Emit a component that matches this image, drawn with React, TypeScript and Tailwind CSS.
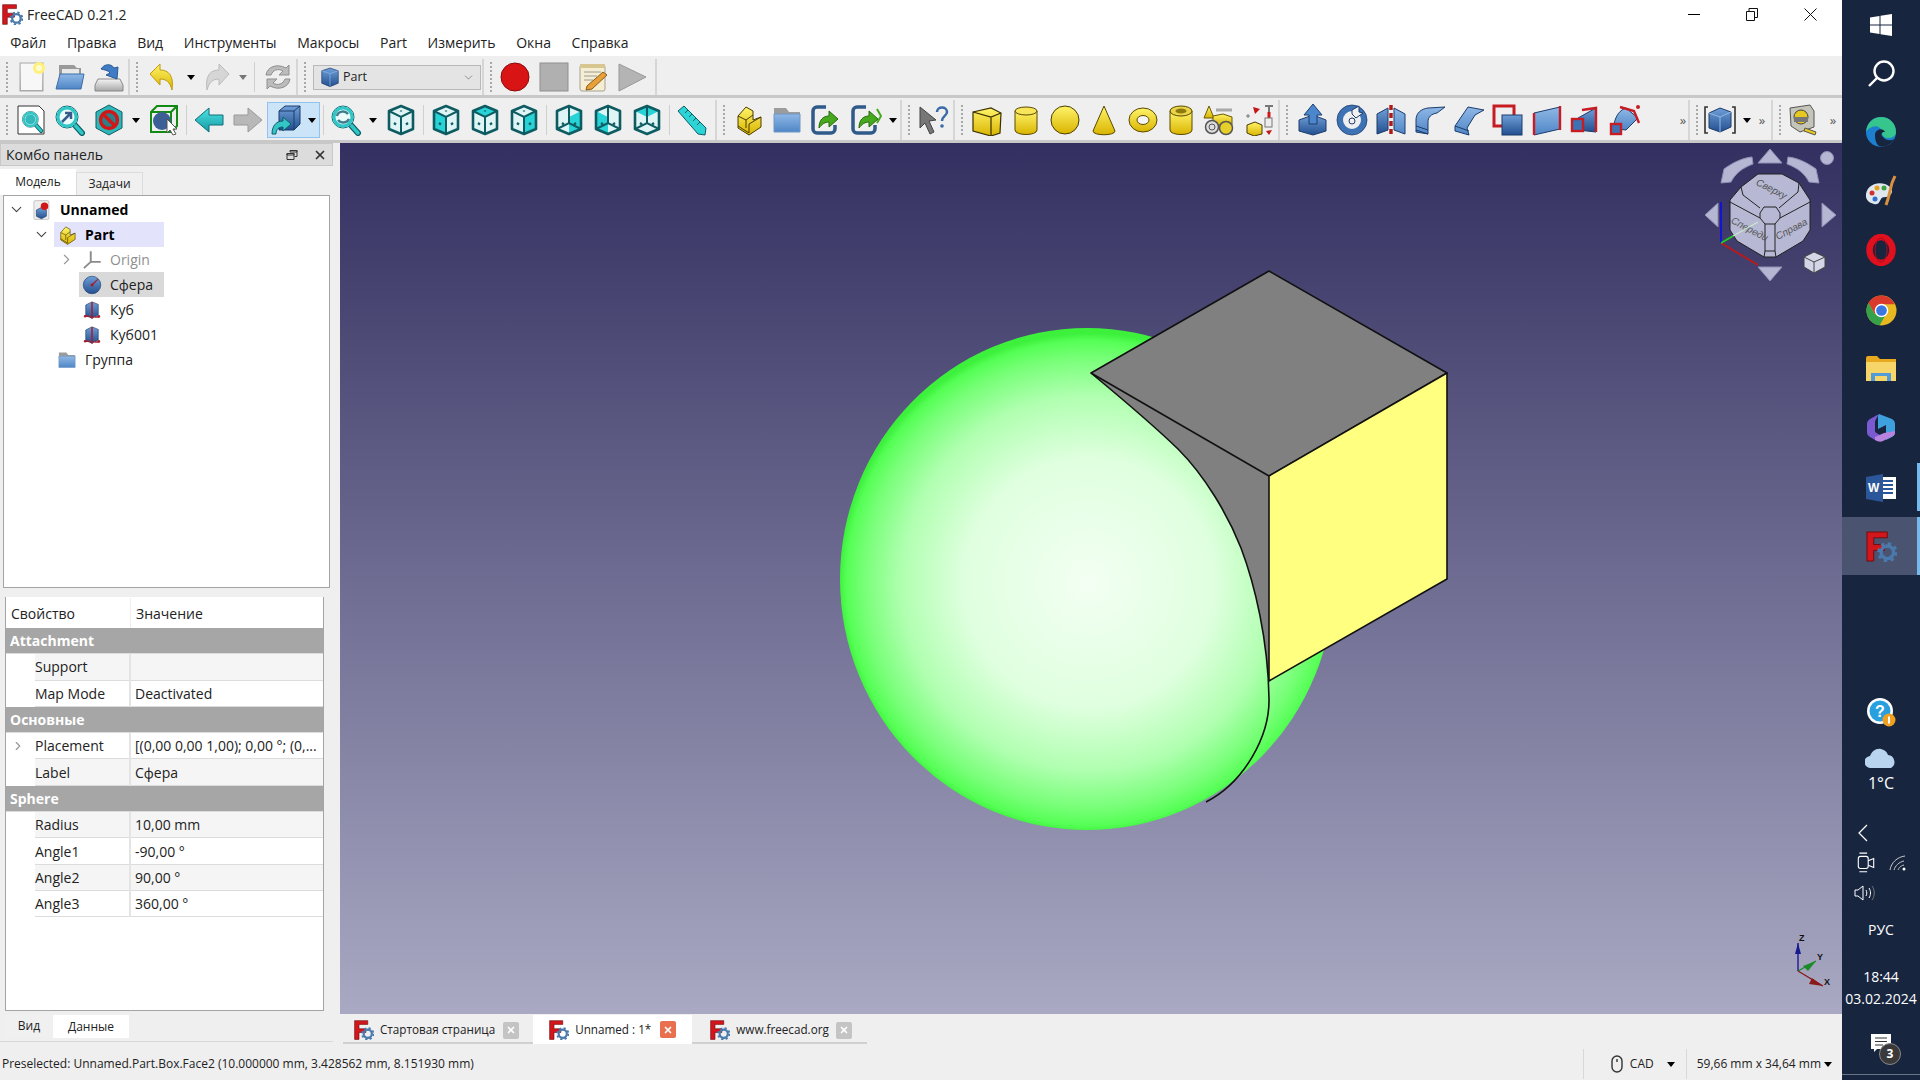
import type { ReactNode } from 'react';
import { ChevronDown, ChevronRight, X } from 'lucide-react';

function Ic({ children, size = 32 }: { children: ReactNode; size?: number }) {
  return (
    <svg width={size} height={size} viewBox="0 0 32 32" className="shrink-0">
      {children}
    </svg>
  );
}

function Defs() {
  const grads: [string, string, string][] = [
    ['gy', '#fff46a', '#d9b400'],
    ['gb', '#6f9fd8', '#234f8f'],
    ['gt', '#4fe3e3', '#149aa4'],
    ['gg', '#f4f4f4', '#a8a8a8'],
    ['gf', '#8fb8e6', '#4f86c6'],
  ];
  return (
    <svg width="0" height="0" className="absolute">
      <defs>
        {grads.map(([id, a, b]) => (
          <linearGradient key={id} id={id} x1="0" y1="0" x2="0" y2="1">
            <stop offset="0" stopColor={a} />
            <stop offset="1" stopColor={b} />
          </linearGradient>
        ))}
        <radialGradient id="sphereShade" gradientUnits="userSpaceOnUse" cx="1089" cy="583" r="250">
          <stop offset="0" stopColor="#f3fff3" />
          <stop offset="0.5" stopColor="#dfffdf" />
          <stop offset="0.75" stopColor="#b0ffb0" />
          <stop offset="0.9" stopColor="#78ff78" />
          <stop offset="0.97" stopColor="#55ff55" />
          <stop offset="1" stopColor="#3cf03c" />
        </radialGradient>
        <linearGradient id="viewBg" x1="0" y1="0" x2="0" y2="1">
          <stop offset="0" stopColor="#332f60" />
          <stop offset="1" stopColor="#a9a9c3" />
        </linearGradient>
      </defs>
    </svg>
  );
}

function Logo({ size = 20 }: { size?: number }) {
  return (
    <svg width={size} height={size} viewBox="0 0 32 32" className="shrink-0">
      <path d="M1 1h21v6H8v7h11v6H8v11H1z" fill="#d3161c" stroke="#6d0d10" strokeWidth="1" />
      <circle cx="22" cy="22" r="6.5" fill="none" stroke="#4a79ad" strokeWidth="3.5" />
      <circle cx="22" cy="22" r="9" fill="none" stroke="#4a79ad" strokeWidth="3" strokeDasharray="3.5 3.6" />
    </svg>
  );
}

/* ---------- file / edit icons ---------- */
const NewDoc = () => (
  <Ic>
    <rect x="5" y="2" width="23" height="28" fill="url(#gg)" stroke="#aaa" />
    <rect x="6" y="3" width="21" height="26" fill="#f7f7f7" />
    <circle cx="24" cy="7" r="6" fill="#fff07a" />
    <circle cx="24" cy="7" r="3" fill="#fffbd0" />
  </Ic>
);
const OpenDoc = () => (
  <Ic>
    <path d="M5 4h15l3 3h4v8H5z" fill="#9a9a9a" />
    <path d="M8 8h17v6H8z" fill="#e8e8e8" />
    <path d="M6 13h24l-3 15H2z" fill="url(#gf)" stroke="#3d6ea8" />
  </Ic>
);
const SaveDoc = () => (
  <Ic>
    <path d="M5 18h22l3 6v6H2v-6z" fill="url(#gg)" stroke="#888" />
    <path d="M8 8c3-5 10-6 13-1l4-1-1 12-11-4 4-2c-2-3-6-3-9-4z" fill="#3f7cc4" stroke="#2a5a95" />
  </Ic>
);
const UndoIcon = ({ gray }: { gray?: boolean }) => (
  <Ic>
    <path
      d="M4 13 14 3v6c9 0 14 6 12 20-2-8-6-11-12-11v6z"
      fill={gray ? '#d6d6d6' : 'url(#gy)'}
      stroke={gray ? '#bbb' : '#c09a10'}
      transform={gray ? 'translate(32 0) scale(-1 1)' : undefined}
    />
  </Ic>
);
const RefreshIcon = () => (
  <Ic>
    <path d="M4 14C5 6 15 2 24 7l3-3v10H17l4-4c-5-3-10-1-12 4z" fill="#bcbcbc" stroke="#8f8f8f" />
    <path d="M28 18c-1 8-11 12-20 7l-3 3V18h10l-4 4c5 3 10 1 12-4z" fill="#bcbcbc" stroke="#8f8f8f" />
  </Ic>
);
const RecordIcon = () => (
  <Ic>
    <circle cx="16" cy="16" r="14" fill="#d81414" stroke="#8a0c0c" />
  </Ic>
);
const StopIcon = () => (
  <Ic>
    <rect x="2" y="2" width="28" height="28" fill="#b0b0b0" stroke="#8f8f8f" />
  </Ic>
);
const MacroIcon = () => (
  <Ic>
    <rect x="3" y="4" width="25" height="26" rx="2" fill="#f5eed2" stroke="#a8a290" />
    <rect x="3" y="3" width="25" height="4" fill="#d8c690" />
    <path d="M7 11h17M7 15h13M7 19h9" stroke="#9a9a9a" />
    <path d="M10 25 26 11l4 3-15 14-6 1z" fill="#e8a13a" stroke="#8a5a18" />
  </Ic>
);
const PlayIcon = () => (
  <Ic>
    <path d="M3 3 30 16 3 30z" fill="#b4b4b4" stroke="#999" />
  </Ic>
);

/* ---------- view icons ---------- */
const Magnifier = ({ children }: { children?: ReactNode }) => (
  <>
    <path d="M19 19l9 10" stroke="#0f5f66" strokeWidth="6" strokeLinecap="round" />
    <path d="M19 19l9 10" stroke="#2fc6c6" strokeWidth="3.5" strokeLinecap="round" />
    <circle cx="13" cy="13" r="11" fill="#e9fbfb" stroke="#0f6f78" strokeWidth="1" />
    <circle cx="13" cy="13" r="9" fill="none" stroke="#2fc6c6" strokeWidth="3" />
    {children}
  </>
);
const FitAll = () => (
  <Ic>
    <path d="M3 2h21l5 5v23H3z" fill="#fff" stroke="#333" />
    <g transform="translate(6 6) scale(.72)">
      <Magnifier />
      <circle cx="13" cy="13" r="7" fill="#33b8bc" />
    </g>
  </Ic>
);
const FitSel = () => (
  <Ic>
    <Magnifier>
      <path d="M8 18l9-9m-6 0h6v6" stroke="#3a5a8c" strokeWidth="2.5" fill="none" />
    </Magnifier>
  </Ic>
);
const DrawStyle = () => (
  <Ic>
    <path d="M16 1 29 8v16l-13 7-13-7V8z" fill="#2fb6b8" stroke="#0f5f66" />
    <circle cx="16" cy="16" r="8.5" fill="#2d7f88" stroke="#d01818" strokeWidth="3.4" />
    <path d="M10 10l12 12" stroke="#d01818" strokeWidth="3.4" />
  </Ic>
);
const BBoxIcon = () => (
  <Ic>
    <path d="M3 8 9 2h20v20l-6 6H3z" fill="none" stroke="#138a13" strokeWidth="2" />
    <path d="M3 8h20v20M23 8l6-6" fill="none" stroke="#138a13" strokeWidth="2" />
    <circle cx="14" cy="17" r="9" fill="#3c5f95" />
    <path d="M19 15v14l3-3 3 5 3-1-3-5h4z" fill="#fff" stroke="#555" />
  </Ic>
);
const NavArrow = ({ gray, flip }: { gray?: boolean; flip?: boolean }) => (
  <Ic>
    <path
      d="M2 16 16 4v7h14v10H16v7z"
      fill={gray ? '#b8b8b8' : 'url(#gt)'}
      stroke={gray ? '#999' : '#0f6f78'}
      transform={flip ? 'translate(32 0) scale(-1 1)' : undefined}
    />
  </Ic>
);
const SyncView = () => (
  <Ic>
    <path d="M9 7 15 2h15v18l-6 6H9z" fill="url(#gb)" stroke="#1c3c6c" />
    <path d="M9 7h15v19M24 7l6-5" fill="none" stroke="#1c3c6c" />
    <path d="M2 30c0-9 5-13 11-13v-4l8 7-8 7v-4c-4 0-7 2-7 7z" fill="#34c6c6" stroke="#0f5f66" />
  </Ic>
);
const ZoomSync = () => (
  <Ic>
    <Magnifier>
      <path d="M7 12c1-5 8-6 11-2m1 5c-2 4-8 5-11 1" fill="none" stroke="#3c7c8c" strokeWidth="2.5" />
    </Magnifier>
  </Ic>
);

function CubeView({ top, left, right, inner }: { top?: boolean; left?: boolean; right?: boolean; inner?: boolean }) {
  const on = '#27d3d6';
  return (
    <Ic>
      <path d="M16 2 28 7v18l-12 5-12-5V7z" fill="#dff5f5" />
      {top && <path d="M16 2 28 7 16 13 4 7z" fill={on} />}
      {left && <path d="M4 7l12 6v17L4 25z" fill={on} />}
      {right && <path d="M28 7 16 13v17l12-5z" fill={on} />}
      {inner ? (
        <path d="M4 25l12-6 12 6M16 19V2" fill="none" stroke="#0e5c62" strokeWidth="2" />
      ) : (
        <path d="M4 7l12 6 12-6M16 13v17" fill="none" stroke="#0e5c62" strokeWidth="2" />
      )}
      <path d="M16 2 28 7v18l-12 5-12-5V7z" fill="none" stroke="#0e5c62" strokeWidth="2.6" strokeLinejoin="round" />
      <path d="M9 19l2 1.5M23 19l-2 1.5M16 7.5v-1" stroke="#0e5c62" strokeWidth="2.2" />
    </Ic>
  );
}
const Ruler = () => (
  <Ic>
    <path d="M8 2 30 24l-1 7-7-1L2 7z" fill="#2dd4d6" stroke="#0f5f66" />
    <path d="M9 9l3-3M13 13l3-3M17 17l3-3M21 21l3-3" stroke="#0f5f66" />
  </Ic>
);

/* ---------- structure ---------- */
const PartIcon = () => (
  <>
    <path d="M6 12l8-9 7 4v9l8-3v10l-12 8L6 24z" fill="url(#gy)" stroke="#4a3c00" />
    <path d="M6 12l8 4v8M14 16l7-5M6 22l11 7M17 29v-9l12-7" fill="none" stroke="#4a3c00" />
  </>
);
const GroupIcon = () => (
  <>
    <path d="M3 4h12l3 4h11v5H3z" fill="#9c9c9c" />
    <path d="M3 10h26v18H3z" fill="url(#gf)" stroke="#6f96c4" />
  </>
);
const LinkIcon = ({ sub }: { sub?: boolean }) => (
  <Ic>
    <path d="M16 3H7a4 4 0 0 0-4 4v18a4 4 0 0 0 4 4h14a4 4 0 0 0 4-4v-4" fill="none" stroke="#2f5a8a" strokeWidth="3.5" />
    <path d="M9 24c0-8 4-12 10-12V7l9 8-9 8v-5c-4 0-7 2-10 6z" fill="#46a81c" stroke="#256b0c" />
    {sub && <path d="M27 5l4 7-4 7" fill="none" stroke="#46a81c" strokeWidth="2" />}
  </Ic>
);
const WhatsThis = () => (
  <Ic>
    <path d="M2 3l16 13-7 1 5 11-4 2-5-11-5 5z" fill="#777" stroke="#444" />
    <path d="M19 8c0-6 10-6 10 0 0 4-5 4-5 9" fill="none" stroke="#3a6aa8" strokeWidth="2.5" />
    <circle cx="24" cy="22" r="1.8" fill="#3a6aa8" />
  </Ic>
);

/* ---------- part primitives ---------- */
const BoxP = () => (
  <Ic>
    <path d="M2 8 20 4l10 5-1 20-9 3-18-5z" fill="url(#gy)" stroke="#3a3000" strokeWidth="1.2" />
    <path d="M2 8l18 5 10-4M20 13v19" fill="none" stroke="#3a3000" strokeWidth="1.2" />
  </Ic>
);
const CylP = () => (
  <Ic>
    <path d="M5 7v19c0 6 22 6 22 0V7z" fill="url(#gy)" stroke="#5a4800" />
    <ellipse cx="16" cy="7" rx="11" ry="4" fill="#f7e55a" stroke="#5a4800" />
  </Ic>
);
const SphereP = () => (
  <Ic>
    <circle cx="16" cy="16" r="14" fill="url(#gy)" stroke="#4a3c00" />
  </Ic>
);
const ConeP = () => (
  <Ic>
    <path d="M16 2 27 27c0 5-22 5-22 0z" fill="url(#gy)" stroke="#5a4800" />
  </Ic>
);
const TorusP = () => (
  <Ic>
    <ellipse cx="16" cy="16" rx="14" ry="12" fill="url(#gy)" stroke="#5a4800" />
    <ellipse cx="16" cy="16" rx="6" ry="4.5" fill="#f4f4f4" stroke="#5a4800" />
  </Ic>
);
const TubeP = () => (
  <Ic>
    <path d="M5 7v19c0 6 22 6 22 0V7z" fill="url(#gy)" stroke="#5a4800" />
    <ellipse cx="16" cy="7" rx="11" ry="5" fill="#e9d548" stroke="#5a4800" />
    <ellipse cx="16" cy="7" rx="5.5" ry="2.4" fill="#8f7a10" />
  </Ic>
);
const CreatePrim = () => (
  <Ic>
    <path d="M6 2 11 14H1z" fill="url(#gy)" stroke="#6a5800" />
    <path d="M13 6h16" stroke="#a8a8a8" strokeWidth="3" />
    <path d="M10 12l10-2 9 3v8H10z" fill="url(#gy)" stroke="#6a5800" />
    <circle cx="9" cy="23" r="6.5" fill="#ddd" stroke="#555" strokeWidth="1.5" />
    <circle cx="9" cy="23" r="3" fill="none" stroke="#555" />
    <circle cx="23" cy="24" r="6.5" fill="#e7cf2a" stroke="#555" strokeWidth="1.5" />
  </Ic>
);
const ShapeBuilder = () => (
  <Ic>
    <path d="M22 2h8M26 2v10" stroke="#777" strokeWidth="2" />
    <path d="M26 8v6" stroke="#d01818" strokeWidth="3" />
    <rect x="22" y="14" width="7" height="9" fill="#eee" stroke="#777" />
    <path d="M10 3l7 2-5 5z" fill="#c41616" />
    <path d="M23 27l6-1-3 5z" fill="#c41616" />
    <path d="M3 12h4M5 10v4" stroke="#777" />
    <path d="M4 21l8-3 7 3v9l-8 2-7-3z" fill="url(#gy)" stroke="#4a3c00" />
  </Ic>
);

/* ---------- part tools ---------- */
const Extrude = () => (
  <Ic>
    <path d="M2 16 16 11l13 5v11l-13 4L2 27z" fill="url(#gb)" stroke="#1c3c6c" />
    <path d="M16 0 25 11h-5v9h-8v-9H7z" fill="#4b87cc" stroke="#1c3c6c" />
  </Ic>
);
const Revolve = () => (
  <Ic>
    <circle cx="16" cy="16" r="12" fill="none" stroke="#3d73b5" strokeWidth="6" />
    <circle cx="16" cy="16" r="15" fill="none" stroke="#1c3c6c" strokeWidth=".8" />
    <circle cx="16" cy="17" r="3" fill="#f0f0f0" stroke="#1c3c6c" />
    <path d="M16 6l7-4v6l4 1-7 5-4-4z" fill="#f0f0f0" stroke="#1c3c6c" />
  </Ic>
);
const Mirror = () => (
  <Ic>
    <path d="M2 10 13 4v22L2 30z" fill="url(#gb)" stroke="#1c3c6c" />
    <path d="M30 10 19 4v22l11 4z" fill="url(#gf)" stroke="#1c3c6c" />
    <path d="M16 1v30" stroke="#b01818" strokeWidth="3.4" strokeDasharray="5 3" />
  </Ic>
);
const Fillet = () => (
  <Ic>
    <path d="M2 28V16C2 9 7 5 14 4l17-1-8 6c-6 1-9 4-9 9v12z" fill="url(#gf)" stroke="#1c3c6c" />
    <path d="M2 22l12 4M2 26l12 4" stroke="#1c3c6c" />
  </Ic>
);
const Chamfer = () => (
  <Ic>
    <path d="M2 22 15 3l16 3-9 5-8 13 2 7-14-4z" fill="url(#gf)" stroke="#1c3c6c" />
    <path d="M2 22l14 5" stroke="#1c3c6c" />
  </Ic>
);
const Direction = () => (
  <Ic>
    <path d="M2 2h20v20H2z" fill="none" stroke="#c81c24" strokeWidth="3" />
    <rect x="10" y="11" width="20" height="20" fill="url(#gb)" stroke="#1c3c6c" />
  </Ic>
);
const Ruled = () => (
  <Ic>
    <path d="M3 9 29 3v22L3 31z" fill="url(#gf)" stroke="#1c3c6c" />
    <path d="M3 9v22M29 2v24" stroke="#c81c24" strokeWidth="2.4" />
  </Ic>
);
const Loft = () => (
  <Ic>
    <path d="M8 14 26 4v24L8 26z" fill="url(#gb)" stroke="#1c3c6c" />
    <path d="M12 6l14-2v24" fill="none" stroke="#c81c24" strokeWidth="2.4" />
    <rect x="2" y="15" width="11" height="12" fill="#3d73b5" stroke="#c81c24" strokeWidth="2.4" />
  </Ic>
);
const Sweep = () => (
  <Ic>
    <path d="M5 20C7 11 11 6 17 4l12 10-12 12-9-1z" fill="url(#gf)" stroke="#1c3c6c" />
    <path d="M11 3l14 4 5 12" fill="none" stroke="#c81c24" strokeWidth="2.4" />
    <circle cx="29" cy="3" r="2" fill="#c81c24" />
    <rect x="2" y="20" width="10" height="10" fill="#3d73b5" stroke="#c81c24" strokeWidth="2.4" />
  </Ic>
);
const ViewBox = () => (
  <Ic>
    <path d="M4 3H1v26h3M28 3h3v26h-3" fill="none" stroke="#333" strokeWidth="1.6" />
    <path d="M5 9l11-5 11 4v15l-11 5-11-4z" fill="url(#gb)" stroke="#1c3c6c" />
    <path d="M5 9l11 4 11-5M16 13v15" fill="none" stroke="#8fb8e6" />
  </Ic>
);
const TapeIcon = () => (
  <Ic>
    <path d="M2 4 22 1l4 6v16L12 28 3 22z" fill="#c4c4b8" stroke="#555" />
    <circle cx="13" cy="13" r="7" fill="#e6c81e" stroke="#444" />
    <rect x="6" y="13" width="14" height="5" fill="#777" />
    <path d="M17 24l11 4-1 3-11-4z" fill="#e6c81e" stroke="#555" />
  </Ic>
);

/* ---------- toolbar bits ---------- */
function Btn({ children, w = 'w-[39px]' }: { children: ReactNode; w?: string }) {
  return <div className={`flex h-full shrink-0 items-center justify-center ${w}`}>{children}</div>;
}
const Grip = () => (
  <div className="ml-[3px] mr-[1px] h-[30px] w-[2px] shrink-0 self-center bg-[repeating-linear-gradient(to_bottom,#a8a8a8_0_2px,transparent_2px_4px)]" />
);
const Sep = () => <div className="mx-[2.5px] h-[30px] w-px shrink-0 self-center bg-[#d0d0d0]" />;
const Drop = ({ gray }: { gray?: boolean }) => (
  <div className="flex w-[16px] shrink-0 items-center justify-center">
    <div
      className={`h-0 w-0 border-x-[4.5px] border-t-[5px] border-x-transparent ${gray ? 'border-t-[#777]' : 'border-t-black'}`}
    />
  </div>
);
const More = () => <span className="w-[14px] shrink-0 text-center text-[13px] leading-none text-[#555]">»</span>;
function TB({ children, w, inner = 'ml-[2px]' }: { children: ReactNode; w: string; inner?: string }) {
  return (
    <div className={`flex h-full shrink-0 items-center border-r-2 border-[#d6d6d6] pl-[3px] ${w}`}>
      <Grip />
      <div className={`flex h-full items-center ${inner}`}>{children}</div>
    </div>
  );
}

function TopToolbar() {
  return (
    <div className="flex h-[42px] border-b-[3px] border-[#c8c8c8] bg-[#efefef] pt-[3px]">
      <TB w="w-[130px]">
        <Btn><NewDoc /></Btn>
        <Btn><OpenDoc /></Btn>
        <Btn><SaveDoc /></Btn>
      </TB>
      <TB w="w-[168px]">
        <Btn w="w-[42px]"><UndoIcon /></Btn>
        <Drop />
        <Btn w="w-[36px]"><UndoIcon gray /></Btn>
        <Drop gray />
        <Sep />
        <Btn w="w-[42px]"><RefreshIcon /></Btn>
      </TB>
      <TB w="w-[186px]">
        <div className="ml-[4px] flex h-[25px] w-[168px] items-center border border-[#b8b8b8] bg-[#e4e4e4] pl-[5px] pr-[5px] text-[12.5px]">
          <Ic size={22}>
            <path d="M4 7l12-4 12 4v18l-12 5-12-5z" fill="url(#gb)" stroke="#1c3c6c" />
            <path d="M4 7l12 4 12-4M16 11v19" fill="none" stroke="#8fb8e6" />
          </Ic>
          <span className="ml-[2px]">Part</span>
          <ChevronDown size={13} strokeWidth={1} className="ml-auto text-[#444]" />
        </div>
      </TB>
      <TB w="w-auto pr-[4px] border-r-0" inner="ml-[2px]">
        <Btn><RecordIcon /></Btn>
        <Btn><StopIcon /></Btn>
        <Btn><MacroIcon /></Btn>
        <Btn><PlayIcon /></Btn>
      </TB>
      <div className="flex-1" />
    </div>
  );
}

function ViewToolbar() {
  return (
    <div className="flex h-[45px] border-b-[3px] border-[#c8c8c8] bg-[#efefef] pt-[2px]">
      <TB w="w-[717px]">
        <Btn><FitAll /></Btn>
        <Btn><FitSel /></Btn>
        <Btn><DrawStyle /></Btn>
        <Drop />
        <Btn><BBoxIcon /></Btn>
        <Sep />
        <Btn><NavArrow /></Btn>
        <Btn><NavArrow gray flip /></Btn>
        <div className="flex h-[36px] w-[53px] shrink-0 items-center border border-[#90c4ee] bg-[#cce4f7]">
          <Btn w="w-[36px]"><SyncView /></Btn>
          <div className="h-full w-px bg-[#90c4ee]" />
          <Drop />
        </div>
        <Sep />
        <Btn><ZoomSync /></Btn>
        <Drop />
        <Btn><CubeView /></Btn>
        <Sep />
        <Btn><CubeView left /></Btn>
        <Btn><CubeView top /></Btn>
        <Btn><CubeView right /></Btn>
        <Sep />
        <Btn><CubeView right inner /></Btn>
        <Btn><CubeView left inner /></Btn>
        <Btn><CubeView top inner /></Btn>
        <Sep />
        <Btn><Ruler /></Btn>
      </TB>
      <TB w="w-[185px]" inner="ml-[2px]">
        <Btn><Ic><PartIcon /></Ic></Btn>
        <Btn><Ic><GroupIcon /></Ic></Btn>
        <Btn w="w-[40px]"><LinkIcon /></Btn>
        <Btn><LinkIcon sub /></Btn>
        <Drop />
      </TB>
      <TB w="w-[53px]" inner="ml-[3px]">
        <Btn w="w-[40px]"><WhatsThis /></Btn>
      </TB>
      <TB w="w-[325px]" inner="ml-[3px]">
        <Btn><BoxP /></Btn>
        <Btn><CylP /></Btn>
        <Btn><SphereP /></Btn>
        <Btn><ConeP /></Btn>
        <Btn><TorusP /></Btn>
        <Btn w="w-[37px]"><TubeP /></Btn>
        <Btn w="w-[40px]"><CreatePrim /></Btn>
        <Btn><ShapeBuilder /></Btn>
      </TB>
      <TB w="w-[410px]" inner="ml-[4px]">
        <Btn><Extrude /></Btn>
        <Btn><Revolve /></Btn>
        <Btn><Mirror /></Btn>
        <Btn><Fillet /></Btn>
        <Btn><Chamfer /></Btn>
        <Btn><Direction /></Btn>
        <Btn><Ruled /></Btn>
        <Btn><Loft /></Btn>
        <Btn><Sweep /></Btn>
        <div className="w-[32px]" />
        <More />
      </TB>
      <TB w="w-[83px]">
        <Btn w="w-[38px]"><ViewBox /></Btn>
        <Drop />
        <More />
      </TB>
      <div className="flex flex-1 items-center pl-[3px]">
        <Grip />
        <Btn w="w-[44px]"><TapeIcon /></Btn>
        <More />
      </div>
    </div>
  );
}

/* ---------- left panel ---------- */
const TreeCube = () => (
  <Ic size={20}>
    <path d="M6 8l10-5 10 4v17l-10 5-10-4z" fill="url(#gb)" stroke="#1c3c6c" />
    <path d="M16 3v26M4 26h8M20 27h8" stroke="#a81c2c" strokeWidth="2.4" />
    <circle cx="16" cy="27" r="2.4" fill="#a81c2c" />
    <circle cx="5" cy="26" r="2" fill="#a81c2c" />
    <circle cx="27" cy="26" r="2" fill="#a81c2c" />
  </Ic>
);

function TreeRow({
  indent,
  chevron,
  icon,
  label,
  bold,
  hl = '',
  muted,
}: {
  indent: string;
  chevron?: 'down' | 'right';
  icon: ReactNode;
  label: string;
  bold?: boolean;
  hl?: string;
  muted?: boolean;
}) {
  return (
    <div className={`flex h-[25px] items-center ${indent}`}>
      <div className="flex w-[25px] shrink-0 justify-center">
        {chevron === 'down' && <ChevronDown size={17} strokeWidth={1.6} className="text-[#444]" />}
        {chevron === 'right' && <ChevronRight size={17} strokeWidth={1.6} className="text-[#999]" />}
      </div>
      <div className={`flex h-[25px] items-center ${hl}`}>
        <div className="flex w-[26px] shrink-0 justify-center">{icon}</div>
        <span className={`ml-[5px] text-[14px] ${bold ? 'font-bold text-black' : muted ? 'text-[#8f8f8f]' : 'text-[#222]'}`}>
          {label}
        </span>
      </div>
    </div>
  );
}

function Tree() {
  return (
    <div className="h-[393px] border border-[#a4a4a4] bg-white pt-[1px]">
      <TreeRow
        indent="pl-0"
        chevron="down"
        label="Unnamed"
        bold
        icon={
          <Ic size={20}>
            <rect x="3" y="1" width="24" height="30" rx="2" fill="#eee" stroke="#aaa" />
            <path d="M7 16l8-4 8 4v10l-8 4-8-4z" fill="url(#gb)" stroke="#1c3c6c" />
            <circle cx="20" cy="10" r="6" fill="#d01818" />
          </Ic>
        }
      />
      <TreeRow indent="pl-[25px]" chevron="down" label="Part" bold hl="w-[110px] bg-[#e3e4fb]" icon={<Ic size={20}><PartIcon /></Ic>} />
      <TreeRow
        indent="pl-[50px]"
        chevron="right"
        label="Origin"
        muted
        icon={
          <Ic size={20}>
            <path d="M14 2v17L3 29M14 19h16" stroke="#8a8a8a" strokeWidth="3" fill="none" />
          </Ic>
        }
      />
      <TreeRow
        indent="pl-[50px]"
        label="Сфера"
        hl="w-[85px] bg-[#d9d9d9]"
        icon={
          <Ic size={20}>
            <circle cx="16" cy="16" r="14" fill="url(#gb)" stroke="#1c3c6c" />
            <path d="M16 16l9-9" stroke="#a81c2c" strokeWidth="2" />
            <circle cx="16" cy="16" r="2.5" fill="#a81c2c" />
          </Ic>
        }
      />
      <TreeRow indent="pl-[50px]" label="Куб" icon={<TreeCube />} />
      <TreeRow indent="pl-[50px]" label="Куб001" icon={<TreeCube />} />
      <TreeRow indent="pl-[25px]" label="Группа" icon={<Ic size={20}><GroupIcon /></Ic>} />
    </div>
  );
}

type PropRow = { group: string } | { name: string; value: string; expand?: boolean };
const props: PropRow[] = [
  { group: 'Attachment' },
  { name: 'Support', value: '' },
  { name: 'Map Mode', value: 'Deactivated' },
  { group: 'Основные' },
  { name: 'Placement', value: '[(0,00 0,00 1,00); 0,00 °; (0,...', expand: true },
  { name: 'Label', value: 'Сфера' },
  { group: 'Sphere' },
  { name: 'Radius', value: '10,00 mm' },
  { name: 'Angle1', value: '-90,00 °' },
  { name: 'Angle2', value: '90,00 °' },
  { name: 'Angle3', value: '360,00 °' },
];

function PropTable() {
  return (
    <div className="ml-[5px] mr-[9px] mt-[9px] h-[414px] border border-t-0 border-[#a4a4a4] bg-white">
      <div className="flex h-[31px] items-center pt-[1px] text-[14px] text-[#222]">
        <div className="w-[124px] pl-[5px]">Свойство</div>
        <div className="h-full w-px bg-[#eee]" />
        <div className="pl-[5px]">Значение</div>
      </div>
      {props.map((r, i) => {
        if ('group' in r) {
          return (
            <div
              key={r.group}
              className="flex h-[26.3px] items-center border-b border-[#dcdcdc] bg-[#a6a6a6] pl-[4px] text-[14px] font-bold text-white"
            >
              {r.group}
            </div>
          );
        }
        const bg = i % 2 === 1 ? 'bg-[#f5f5f5]' : 'bg-white';
        return (
          <div key={r.name} className="flex h-[26.3px] items-center text-[14px] text-[#222]">
            <div className="flex h-full w-[29px] items-center pl-[5px]">
              {r.expand && <ChevronRight size={14} className="text-[#999]" />}
            </div>
            <div className={`flex h-full w-[94px] items-center border-b border-[#dcdcdc] ${bg}`}>{r.name}</div>
            <div className="h-full w-[2px] bg-[#e4e4e4]" />
            <div className={`flex h-full flex-1 items-center whitespace-nowrap border-b border-[#dcdcdc] pl-[4px] ${bg}`}>
              {r.value}
            </div>
          </div>
        );
      })}
    </div>
  );
}

function LeftPanel() {
  return (
    <div className="flex w-[340px] shrink-0 flex-col bg-[#efefef] pr-[7px]">
      <div className="flex h-[23px] items-center border border-[#c8c8c8] bg-[#dcdcdc] pl-[5px] pr-[5px] text-[14px] text-[#222]">
        <span>Комбо панель</span>
        <svg width="12" height="12" viewBox="0 0 12 12" className="ml-auto mr-[15px]">
          <path d="M4 1.5h7v6H8.5M1 4.5h7v6H1zM1 4.5h7V6H1zM4 1.5h7V3H4z" fill="none" stroke="#333" />
        </svg>
        <X size={14} strokeWidth={3} className="text-[#333]" />
      </div>
      <div className="flex h-[29px] items-end text-[12px] text-[#222]">
        <div className="flex h-[26px] w-[76px] items-center justify-center bg-white">Модель</div>
        <div className="flex h-[23px] w-[67px] items-center justify-center border border-b-0 border-[#dcdcdc] bg-[#f0f0f0]">Задачи</div>
      </div>
      <div className="mx-[3px]">
        <Tree />
      </div>
      <PropTable />
      <div className="flex h-[31px] flex-col">
        <div className="ml-[5px] mt-[4px] flex h-[23px] items-start text-[12px] text-[#222]">
          <div className="flex h-[22px] w-[48px] items-center justify-center bg-[#f0f0f0]">Вид</div>
          <div className="flex h-[23px] w-[76px] items-center justify-center bg-white">Данные</div>
        </div>
        <div className="mt-[3px] h-px bg-[#d8d8d8]" />
      </div>
    </div>
  );
}

/* ---------- 3d view ---------- */
const CUT = 'M1091 373 C1120 397 1150 422 1178 449 C1205 476 1228 515 1241 548 C1255 585 1268 640 1269 698';

function Scene() {
  return (
    <svg viewBox="340 143 1502 871" className="absolute inset-0 h-full w-full">
      <rect x="340" y="143" width="1502" height="871" fill="url(#viewBg)" />
      <ellipse cx="1087" cy="579" rx="247" ry="251" fill="url(#sphereShade)" />
      <path d={`${CUT} L1269 476 Z`} fill="#808080" />
      <path d="M1269 271 L1447 373 L1269 476 L1091 373 Z" fill="#808080" stroke="#111" strokeWidth="1.6" strokeLinejoin="round" />
      <path d="M1269 476 L1447 373 V579 L1269 681 Z" fill="#ffff80" stroke="#111" strokeWidth="1.6" strokeLinejoin="round" />
      <path d={`${CUT} C1270 735 1245 782 1206 802`} fill="none" stroke="#111" strokeWidth="1.6" />

      {/* navigation cube */}
      <g fill="#b4b6d2" stroke="#8f90b5" strokeWidth="1">
        <path d="M1770 149 L1782 163 H1758 Z" />
        <path d="M1758 267 H1782 L1770 281 Z" />
        <path d="M1718 203 L1705 215 L1718 227 Z" />
        <path d="M1822 203 L1836 215 L1822 227 Z" />
        <circle cx="1827" cy="158" r="6.5" />
        <path d="M1752 157 L1753 164 C1742 168 1735 174 1731 182 L1721 183 L1724 169 C1731 164 1741 158 1752 157 Z" />
        <path d="M1788 157 L1787 164 C1798 168 1805 174 1809 182 L1819 183 L1816 169 C1809 164 1799 158 1788 157 Z" />
        <path d="M1804 257 L1814 252 L1825 257 V267 L1814 273 L1804 267 Z" fill="#d4d6e8" stroke="#444" />
        <path d="M1804 257 L1814 262 L1825 257 M1814 262 V273" fill="none" stroke="#444" />
      </g>
      <path
        d="M1758 174 H1782 L1799 183 L1810 200 V230 L1803 241 L1776 257 H1764 L1737 241 L1730 230 V200 L1741 187 Z"
        fill="#b7b9d4"
        stroke="#222"
        strokeWidth="1"
        strokeLinejoin="round"
      />
      <path
        d="M1741 187 L1743 195 L1760 208 M1799 183 L1798 192 L1779 208 M1730 202 L1760 218 M1810 202 L1780 218 M1760 213 L1764 207 H1776 L1780 213 V218 L1775 224 H1765 L1760 218 Z M1765 224 V251 H1775 V224 M1765 251 L1764 257 M1775 251 L1776 257"
        fill="none"
        stroke="#222"
        strokeWidth="1"
      />
      <g fontFamily="'Liberation Sans', sans-serif" fontSize="10" fill="#555" fontStyle="italic" textAnchor="middle">
        <text x="1770" y="192" transform="rotate(27 1770 192)">Сверху</text>
        <text x="1748" y="232" transform="rotate(28 1748 232)">Спереди</text>
        <text x="1793" y="232" transform="rotate(-28 1793 232)">Справа</text>
      </g>
      <path d="M1721 202 V243" stroke="#1010e0" strokeWidth="1.8" />
      <path d="M1721 243 L1758 265" stroke="#c01818" strokeWidth="1.8" />
      <path d="M1721 243 L1733 236" stroke="#20d020" strokeWidth="1.8" />
      <path d="M1733 236 L1758 222" stroke="#c8e8c8" strokeWidth="1.2" />

      {/* axis cross */}
      <path d="M1798 971 V943" stroke="#1a1a90" strokeWidth="1.4" />
      <path d="M1798 943 L1801 954 H1795 Z" fill="#1a1a90" />
      <path d="M1798 971 L1816 961" stroke="#1a8a2a" strokeWidth="1.4" />
      <path d="M1816 961 L1803 966 L1808 971 Z" fill="#1a8a2a" />
      <path d="M1798 971 L1823 986" stroke="#8a1a1a" strokeWidth="1.4" />
      <path d="M1823 986 L1812 978 L1809 984 Z" fill="#8a1a1a" />
      <g fontFamily="'Liberation Sans', sans-serif" fontSize="9" fontWeight="700" fill="#111">
        <text x="1799" y="941">Z</text>
        <text x="1817" y="960">Y</text>
        <text x="1824" y="985">X</text>
      </g>
    </svg>
  );
}

function DocTab({ label, className, close }: { label: string; className: string; close: string }) {
  return (
    <div className={`flex items-center ${className}`}>
      <Logo size={20} />
      <span className="ml-[6px] whitespace-nowrap text-[11.7px] text-[#222]">{label}</span>
      <div className={`flex h-[17px] w-[16px] items-center justify-center rounded-[2px] ${close}`}>
        <X size={10} strokeWidth={4} className="text-white" />
      </div>
    </div>
  );
}

/* ---------- taskbar ---------- */
function Slot({ h, children, className = '' }: { h: string; children?: ReactNode; className?: string }) {
  return <div className={`flex w-full shrink-0 items-center justify-center ${h} ${className}`}>{children}</div>;
}

function Taskbar() {
  return (
    <div className="flex h-full w-[78px] shrink-0 flex-col bg-[#18253f] text-white">
      <Slot h="h-[49px]">
        <svg width="22" height="22" viewBox="0 0 22 22">
          <path d="M0 3.5 9.5 2v8.5H0zM10.5 1.8 22 0v10.5H10.5zM0 11.5h9.5V20L0 18.5zM10.5 11.5H22V22l-11.5-1.8z" fill="#fff" />
        </svg>
      </Slot>
      <Slot h="h-[50px]">
        <svg width="28" height="28" viewBox="0 0 28 28" fill="none" stroke="#fff" strokeWidth="2.4">
          <circle cx="17" cy="11" r="9.5" />
          <path d="M10 18 2 26" />
        </svg>
      </Slot>
      <Slot h="h-[66px]">
        <svg width="32" height="32" viewBox="0 0 32 32">
          <circle cx="16" cy="16" r="15" fill="#1d7fd0" />
          <path d="M1 16C2 6 9 1 16 1c8 0 15 6 15 15 0 4-4 6-8 6-3 0-6-2-6-5 0-6-6-8-10-6-3 1-5 3-6 5z" fill="#36c58c" />
          <path d="M10 19c0-6 8-8 10-3-3 0-5 2-2 5 3 4 8 4 11 2-4 7-11 9-15 7-3-2-4-7-4-11z" fill="#18253f" />
        </svg>
      </Slot>
      <Slot h="h-[54px]">
        <svg width="32" height="34" viewBox="0 0 32 34">
          <path d="M1 22C0 12 10 6 20 9c8 3 9 9 4 12-4 2-6 0-8 3s-2 6-7 5c-4-1-7-3-8-7z" fill="#dfe8ee" />
          <circle cx="7" cy="18" r="2.5" fill="#d03030" />
          <circle cx="12" cy="13" r="2.5" fill="#e8a020" />
          <circle cx="19" cy="13" r="2.5" fill="#40a040" />
          <circle cx="10" cy="24" r="2.5" fill="#3070d0" />
          <path d="M30 1 27 8l-4 16-2 6" stroke="#d89040" strokeWidth="3" fill="none" />
        </svg>
      </Slot>
      <Slot h="h-[62px]">
        <svg width="30" height="32" viewBox="0 0 30 32">
          <ellipse cx="15" cy="16" rx="11.5" ry="13" fill="none" stroke="#e0101e" strokeWidth="6.5" />
          <ellipse cx="15" cy="16" rx="6" ry="12" fill="none" stroke="#b00a18" strokeWidth="1" />
        </svg>
      </Slot>
      <Slot h="h-[58px]">
        <svg width="31" height="31" viewBox="0 0 32 32">
          <circle cx="16" cy="16" r="15.5" fill="#e8b820" />
          <path d="M16 .5A15.5 15.5 0 0 0 2.5 8.3L9 19.5 16 9.5h13.5A15.5 15.5 0 0 0 16 .5z" fill="#d93a2c" />
          <path d="M2.5 8.3A15.5 15.5 0 0 0 14 31.4l6-10.4L9 19.5z" fill="#35a24a" />
          <circle cx="16" cy="16" r="7" fill="#fff" />
          <circle cx="16" cy="16" r="5.5" fill="#3a78e0" />
        </svg>
      </Slot>
      <Slot h="h-[58px]">
        <svg width="30" height="26" viewBox="0 0 30 26">
          <path d="M0 3a2 2 0 0 1 2-2h9l3 3h16v3H0z" fill="#e8a820" />
          <path d="M0 7h30v19H0z" fill="#f8d568" />
          <path d="M5 26v-8h20v8h-4v-5H9v5z" fill="#4f9cd8" />
        </svg>
      </Slot>
      <Slot h="h-[62px]">
        <svg width="30" height="30" viewBox="0 0 30 30">
          <path d="M13 1 26 6c2 1 3 3 3 5v8c0 2-1 4-3 5l-6 3V12l-8 4V3z" fill="#3ea0dc" />
          <path d="M13 1 4 6C2 7 1 9 1 11v8c0 2 1 4 3 5l5 3 8-3-8-5V8z" fill="#7a5ad0" />
          <path d="M9 27c3 2 6 2 8 1l10-5c2-1 2-3 2-5l-11 2-9 4z" fill="#b884e0" />
        </svg>
      </Slot>
      <Slot h="h-[58px]" className="relative">
        <svg width="30" height="28" viewBox="0 0 30 28">
          <rect x="9" y="3" width="21" height="22" fill="#fff" />
          <path d="M16 7h11M16 11h11M16 15h11M16 19h11" stroke="#2b579a" strokeWidth="2" />
          <path d="M0 3 17 0v28L0 25z" fill="#2b579a" />
          <text x="2" y="18" fontFamily="'Liberation Sans', sans-serif" fontSize="12" fontWeight="700" fill="#fff">W</text>
        </svg>
        <div className="absolute right-0 top-[4px] h-[48px] w-[3px] bg-[#76b9ed]" />
      </Slot>
      <Slot h="h-[58px]" className="relative bg-[#4a5470]">
        <Logo size={31} />
        <div className="absolute inset-y-0 right-0 w-[3px] bg-[#76b9ed]" />
      </Slot>
      <div className="h-[112px] shrink-0" />
      <Slot h="h-[50px]">
        <svg width="30" height="30" viewBox="0 0 30 30">
          <circle cx="14" cy="14" r="13" fill="#fff" />
          <circle cx="14" cy="14" r="10.5" fill="#2a9fe0" />
          <text x="14" y="20" textAnchor="middle" fontFamily="'Liberation Sans', sans-serif" fontSize="16" fontWeight="700" fill="#fff">?</text>
          <circle cx="23" cy="23" r="6.5" fill="#f0a020" />
          <rect x="22" y="19.5" width="2" height="7" fill="#fff" />
        </svg>
      </Slot>
      <Slot h="h-[36px]" className="pt-[6px]">
        <svg width="32" height="20" viewBox="0 0 32 20">
          <path d="M6 20a6 6 0 0 1-1-12c2-5 6-8 11-7 4 1 6 3 7 6a7 7 0 0 1 3 13z" fill="#b8d4ee" />
        </svg>
      </Slot>
      <Slot h="h-[19px]" className="text-[16px]">1°C</Slot>
      <Slot h="h-[56px]" className="pr-[36px] pt-[26px]">
        <svg width="12" height="20" viewBox="0 0 12 20" fill="none" stroke="#fff" strokeWidth="1.2">
          <path d="M10 2 2 10l8 8" />
        </svg>
      </Slot>
      <div className="flex h-[30px] shrink-0 items-center gap-[14px] pl-[15px]">
        <svg width="18" height="22" viewBox="0 0 16 20" fill="none" stroke="#fff" strokeWidth="1">
          <rect x="1" y="4" width="9" height="11" rx="2" />
          <path d="M10 8l5-2v8l-5-2M2 1h7M2 18h7" />
        </svg>
        <svg width="18" height="18" viewBox="0 0 18 18" fill="none" stroke="#c8c8c8" strokeWidth="1">
          <path d="M1 16C2 9 8 3 16 2M5 16c1-4 5-8 10-9M9 16c1-2 2-4 6-5" />
          <circle cx="15" cy="15" r="1.5" fill="#fff" stroke="none" />
        </svg>
      </div>
      <div className="flex h-[30px] shrink-0 items-center pl-[12px]">
        <svg width="22" height="18" viewBox="0 0 22 18" fill="none" stroke="#fff" strokeWidth="1">
          <path d="M1 6h3l5-4v14l-5-4H1z" />
          <path d="M12 6c1 2 1 4 0 6M15 4c2 3 2 7 0 10" />
          <path d="M18 2c3 4 3 10 0 14" stroke="#777" />
        </svg>
      </div>
      <Slot h="h-[42px]" className="text-[14px]">РУС</Slot>
      <div className="flex h-[76px] shrink-0 flex-col items-center justify-center text-[14px] leading-[22.5px]">
        <span>18:44</span>
        <span className="whitespace-nowrap">03.02.2024</span>
      </div>
      <Slot h="h-[34px]" className="relative">
        <svg width="20" height="18" viewBox="0 0 20 18">
          <path d="M0 0h20v15H6l-3 3v-3H0z" fill="#fff" />
          <path d="M4 4h12M4 7.5h12M4 11h8" stroke="#333" />
        </svg>
        <div className="absolute left-[37px] top-[17px] flex h-[22px] w-[22px] items-center justify-center rounded-full border border-[#888] bg-[#3a3a3a] text-[12px] font-bold">
          3
        </div>
      </Slot>
      <div className="mt-[14px] h-px bg-[#6a7286]" />
    </div>
  );
}

export default function App() {
  return (
    <div className="flex h-[1080px] w-[1920px] overflow-hidden bg-white font-['Open_Sans',sans-serif] text-[#222]">
      <Defs />
      <div className="flex h-full w-[1842px] shrink-0 flex-col">
        {/* title bar */}
        <div className="flex h-[28px] items-center bg-white">
          <div className="ml-[2px] mt-[1px]">
            <Logo size={21} />
          </div>
          <span className="ml-[4px] text-[14px] text-[#222]">FreeCAD 0.21.2</span>
          <div className="ml-auto mr-[25px] flex items-center gap-[46px]">
            <div className="h-px w-[12px] bg-black" />
            <svg width="12" height="13" viewBox="0 0 12 13" fill="none" stroke="#111">
              <path d="M.5 3.5h8v9h-8zM3 3.5V.5h8.5v9h-3" />
            </svg>
            <svg width="13" height="13" viewBox="0 0 13 13" stroke="#111">
              <path d="M.5.5l12 12M12.5.5l-12 12" />
            </svg>
          </div>
        </div>
        {/* menu */}
        <div className="flex h-[28px] items-center bg-white text-[14px] text-[#222]">
          {['Файл', 'Правка', 'Вид', 'Инструменты', 'Макросы', 'Part', 'Измерить', 'Окна', 'Справка'].map((m) => (
            <span key={m} className="px-[10.35px]">{m}</span>
          ))}
        </div>
        <TopToolbar />
        <ViewToolbar />
        <div className="flex min-h-0 flex-1">
          <LeftPanel />
          <div className="flex min-w-0 flex-1 flex-col">
            <div className="relative flex-1">
              <Scene />
            </div>
            <div className="flex h-[30px] items-end bg-[#efefef] pl-[3px]">
              <DocTab label="Стартовая страница" className="h-[26px] border-b-2 border-[#d0d0d0] pl-[11px] pr-[14px]" close="ml-[8px] bg-[#c4c4c4]" />
              <DocTab label="Unnamed : 1*" className="h-[29px] bg-white pl-[16px] pr-[16px]" close="ml-[9px] bg-[#e8704f]" />
              <DocTab label="www.freecad.org" className="h-[26px] border-b-2 border-[#d0d0d0] pl-[18px] pr-[15px]" close="ml-[7px] bg-[#c4c4c4]" />
            </div>
          </div>
        </div>
        {/* status bar */}
        <div className="flex h-[36px] items-center bg-[#efefef] pl-[2px] pt-[4px] text-[12px] text-[#222]">
          <span>Preselected: Unnamed.Part.Box.Face2 (10.000000 mm, 3.428562 mm, 8.151930 mm)</span>
          <div className="ml-auto flex h-[30px] items-center">
            <div className="h-full w-px bg-[#d8d8d8]" />
            <svg width="14" height="18" viewBox="0 0 14 18" fill="none" stroke="#333" strokeWidth="1.4" className="ml-[26px]">
              <rect x="2" y="1" width="10" height="16" rx="5" />
              <path d="M7 4v3" />
            </svg>
            <span className="ml-[6px]">CAD</span>
            <div className="ml-[13px] h-0 w-0 border-x-[4.5px] border-t-[5px] border-x-transparent border-t-black" />
            <div className="ml-[11px] h-full w-px bg-[#d8d8d8]" />
            <span className="ml-[10px] whitespace-nowrap">59,66 mm x 34,64 mm</span>
            <div className="ml-[3px] mr-[10px] h-0 w-0 border-x-[4.5px] border-t-[5px] border-x-transparent border-t-black" />
          </div>
        </div>
      </div>
      <Taskbar />
    </div>
  );
}
